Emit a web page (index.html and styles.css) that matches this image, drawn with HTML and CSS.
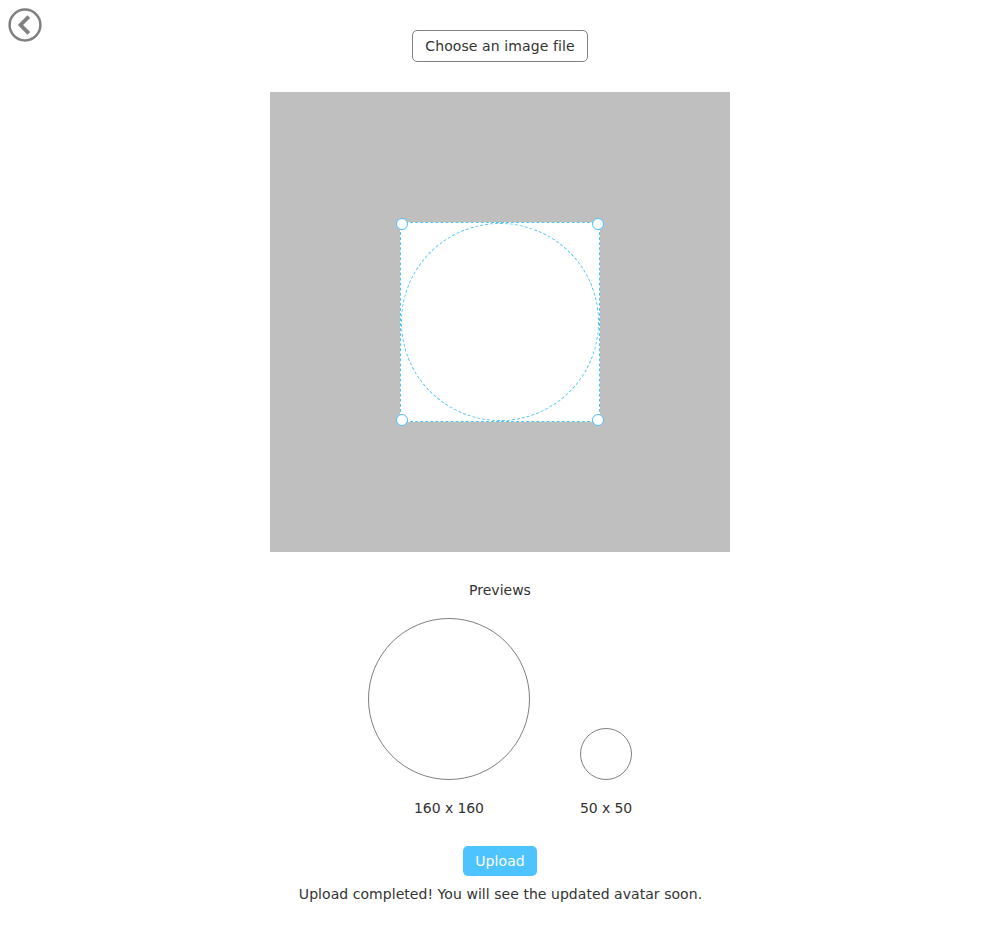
FILE: index.html
```html
<!DOCTYPE html>
<html lang="en">
<head>
<meta charset="utf-8">
<title>Avatar upload</title>
<link rel="stylesheet" href="styles.css">
</head>
<body>
<a class="back" aria-label="Back"><svg width="34" height="34" viewBox="0 0 34 34" fill="none" stroke="#808080"><circle cx="17" cy="17" r="15.4" stroke-width="2.5"/><path d="M20.8 8.7 12.5 17 20.8 25.3" stroke-width="3.8"/></svg></a>
<main class="page">
  <button class="choose">Choose an image file</button>
  <div class="canvas">
    <div class="crop">
      <div class="round"></div>
      <i class="handle nw"></i><i class="handle ne"></i><i class="handle sw"></i><i class="handle se"></i>
    </div>
  </div>
  <div class="title">Previews</div>
  <div class="previews">
    <div class="preview"><div class="circle large"></div><span>160 x 160</span></div>
    <div class="preview"><div class="circle small"></div><span>50 x 50</span></div>
  </div>
  <button class="upload">Upload</button>
  <div class="message">Upload completed! You will see the updated avatar soon.</div>
</main>
</body>
</html>
```
FILE: styles.css
```css
* { box-sizing: border-box; }
body { margin: 0; background: #fff; color: #333; font: 14px/20px "DejaVu Sans", sans-serif; }
.back { position: absolute; left: 8px; top: 8px; }
.back svg { display: block; }
.page { display: flex; flex-direction: column; align-items: center; padding-top: 30px; }
button { font: inherit; padding: 0 12px; border-radius: 5px; }
.choose { width: 176px; height: 32px; border: 1px solid #808080; background: #fff; color: #333; letter-spacing: 0.1px; white-space: nowrap; }
.canvas { width: 460px; height: 460px; margin-top: 30px; padding: 130px; background: #bfbfbf; }
.crop { position: relative; width: 200px; height: 200px; background: #fff; border: 1px dashed #4dc3ff; }
.round { width: 198px; height: 198px; border: 1px dashed #4dc3ff; border-radius: 50%; }
.handle { position: absolute; width: 12px; height: 12px; background: #fff; border: 1px solid #4dc3ff; border-radius: 50%; }
.nw { left: -5px; top: -5px; }
.ne { right: -5px; top: -5px; }
.sw { left: -5px; bottom: -5px; }
.se { right: -5px; bottom: -5px; }
.title { margin-top: 28px; }
.previews { display: flex; align-items: flex-end; gap: 50px; margin-top: 18px; }
.preview { display: flex; flex-direction: column; align-items: center; gap: 18px; letter-spacing: -0.08px; white-space: nowrap; }
.preview:last-child { width: 52px; }
.circle { border: 1px solid #808080; border-radius: 50%; }
.large { width: 162px; height: 162px; }
.small { width: 52px; height: 52px; }
.upload { width: 74px; height: 30px; margin-top: 28px; border: 0; background: #4dc3ff; color: #fff; letter-spacing: 0.1px; }
.message { margin-top: 8px; padding-left: 1px; letter-spacing: 0.05px; }
```
